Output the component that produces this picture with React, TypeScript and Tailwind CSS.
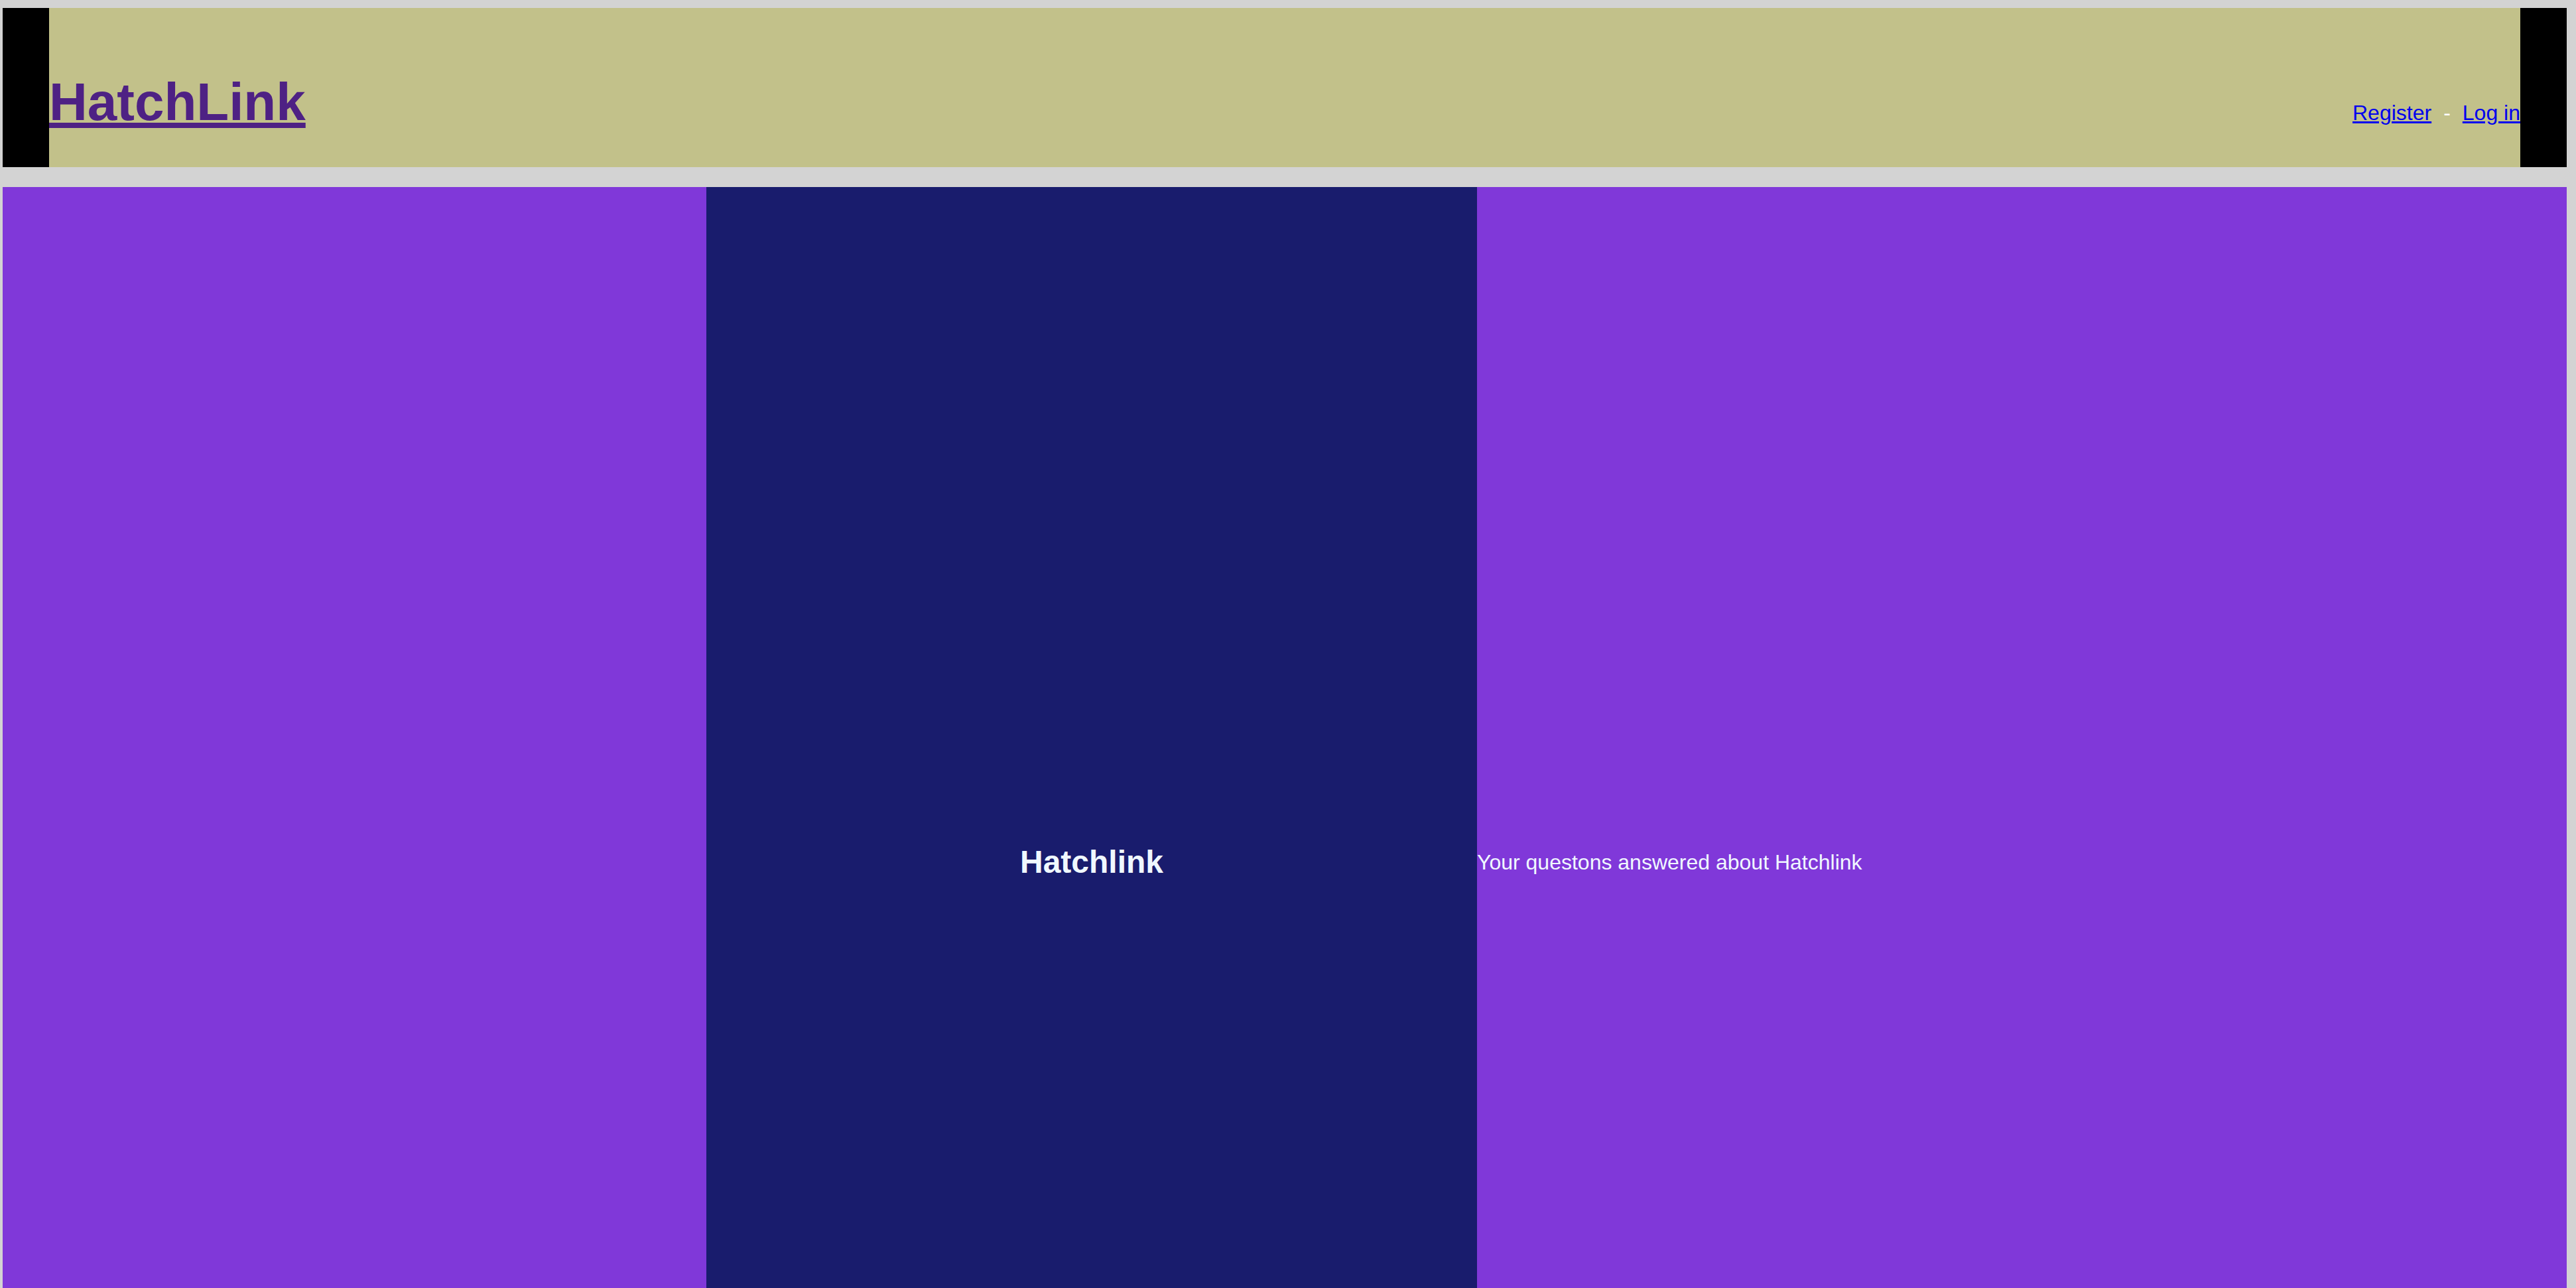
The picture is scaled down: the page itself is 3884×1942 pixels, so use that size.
export default function App() {
  return (
    <div
      className="min-h-screen bg-[#d3d3d3] pl-[4px] pr-[14px] pt-[12px] overflow-hidden"
      style={{ fontFamily: '"Liberation Sans", Arial, sans-serif' }}
    >
      <header className="h-[240px] bg-[#c2c18a] border-l-[70px] border-r-[70px] border-black flex items-baseline justify-between pt-[102px]">
        <a href="#" className="text-[80px] leading-none font-bold text-[#4e2184] underline">
          HatchLink
        </a>
        <nav className="flex items-baseline gap-[18px] text-[32px] leading-none">
          <a href="#" className="text-[#0000ee] underline">Register</a>
          <span className="text-white">-</span>
          <a href="#" className="text-[#0000ee] underline">Log in</a>
        </nav>
      </header>

      <main className="mt-[30px] h-[2036px] bg-[#8038d9] grid grid-cols-[1061px_1162px_1fr]">
        <div />
        <div className="bg-[#191c6d] flex items-center justify-center">
          <h1 className="text-[48px] font-bold text-[#f0f8ff]">Hatchlink</h1>
        </div>
        <div className="flex items-center">
          <p className="text-[32px] text-[#f0f8ff]">Your questons answered about Hatchlink</p>
        </div>
      </main>
    </div>
  );
}
